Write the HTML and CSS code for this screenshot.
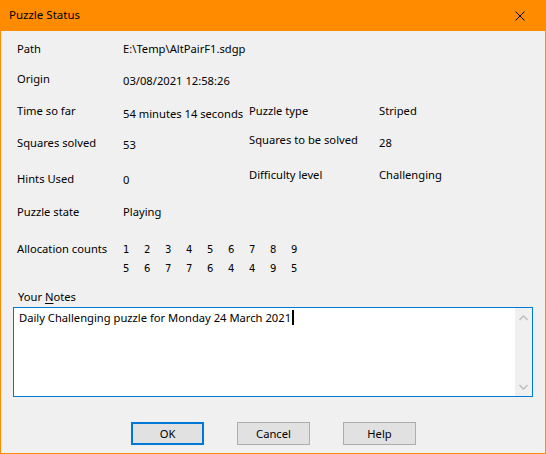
FILE: index.html
```html
<!DOCTYPE html>
<html lang="en">
<head>
<meta charset="utf-8">
<title>Puzzle Status</title>
<link rel="stylesheet" href="styles.css">
</head>
<body>
<div class="window">
  <div class="titlebar">
    <span class="title">Puzzle Status</span>
    <span class="close" aria-label="Close">
      <svg width="10" height="10" viewBox="0 0 10 10"><path d="M0.5 0.5 L9.5 9.5 M9.5 0.5 L0.5 9.5" stroke="#000" stroke-width="1" fill="none"/></svg>
    </span>
  </div>
  <div class="client">
    <div class="info">
      <div class="row r-path">
        <span class="lbl">Path</span>
        <span class="val">E:\Temp\AltPairF1.sdgp</span>
      </div>
      <div class="row r-origin">
        <span class="lbl">Origin</span>
        <span class="val dn2">03/08/2021 12:58:26</span>
      </div>
      <div class="row r-time">
        <span class="lbl">Time so far</span>
        <span class="val dn3">54 minutes 14 seconds</span>
        <span class="lbl2">Puzzle type</span>
        <span class="val2">Striped</span>
      </div>
      <div class="row r-squares">
        <span class="lbl dn3">Squares solved</span>
        <span class="val dn5">53</span>
        <span class="lbl2">Squares to be solved</span>
        <span class="val2 dn3">28</span>
      </div>
      <div class="row r-hints">
        <span class="lbl dn4">Hints Used</span>
        <span class="val dn5">0</span>
        <span class="lbl2">Difficulty level</span>
        <span class="val2">Challenging</span>
      </div>
      <div class="row r-state">
        <span class="lbl">Puzzle state</span>
        <span class="val">Playing</span>
      </div>
      <div class="row r-alloc">
        <span class="lbl">Allocation counts</span>
        <div class="counts">
          <span>1</span><span>2</span><span>3</span><span>4</span><span>5</span><span>6</span><span>7</span><span>8</span><span>9</span>
          <span>5</span><span>6</span><span>7</span><span>7</span><span>6</span><span>4</span><span>4</span><span>9</span><span>5</span>
        </div>
      </div>
    </div>
    <div class="notes-label">Your <u>N</u>otes</div>
    <div class="notes">
      <div class="notes-text">Daily Challenging puzzle for Monday 24 March 2021<span class="caret"></span></div>
      <div class="vscroll">
        <svg width="9" height="6" viewBox="0 0 9 6"><path d="M0.5 5 L4.5 1 L8.5 5" stroke="#c2c2c2" stroke-width="1.6" fill="none"/></svg>
        <svg width="9" height="6" viewBox="0 0 9 6"><path d="M0.5 1 L4.5 5 L8.5 1" stroke="#c2c2c2" stroke-width="1.6" fill="none"/></svg>
      </div>
    </div>
    <div class="buttons">
      <button class="btn default">OK</button>
      <button class="btn">Cancel</button>
      <button class="btn">Help</button>
    </div>
  </div>
</div>
</body>
</html>
```
FILE: styles.css
```css
* {
  box-sizing: border-box;
}

html, body {
  margin: 0;
  padding: 0;
  background: #f0f0f0;
}

body {
  font-family: "Noto Sans", "Open Sans", sans-serif;
  font-size: 11.2px;
  line-height: 16px;
  color: #000;
  white-space: nowrap;
}

.window {
  width: 546px;
  height: 454px;
  border: 1px solid #ff8c00;
  border-top: 0;
  display: flex;
  flex-direction: column;
  background: #f0f0f0;
}

/* caption bar */
.titlebar {
  height: 31px;
  margin: 0 -1px;
  background: #ff8c00;
  display: flex;
  align-items: center;
  justify-content: space-between;
  padding: 0 21px 1px 9px;
}

.title {
  font-size: 11.5px;
}

.close {
  display: flex;
  padding-top: 1px;
}

.client {
  flex: 1;
  padding: 10px 12px 0 12px;
  display: flex;
  flex-direction: column;
}

/* label / value table */
.info {
  display: flex;
  flex-direction: column;
  padding-left: 4px;
}

.row {
  display: grid;
  grid-template-columns: 106px 126px 130px 1fr;
  align-items: start;
}

.r-path { height: 30px; }
.r-origin { height: 32px; }
.r-time { height: 29px; }
.r-squares { height: 35px; }
.r-hints { height: 37px; }
.r-state { height: 37px; }
.r-alloc { height: 48px; }

.dn2 { padding-top: 2px; }
.dn3 { padding-top: 3px; }
.dn4 { padding-top: 4px; }
.dn5 { padding-top: 5px; }

.counts {
  grid-column: 2 / 5;
  display: grid;
  grid-template-columns: repeat(9, 21px);
  row-gap: 3px;
  padding-top: 1px;
  font-family: "DejaVu Sans", sans-serif;
  font-size: 10px;
  line-height: 16px;
}

.notes-label {
  padding-left: 5px;
  height: 18px;
}

.notes-label u {
  text-decoration-thickness: 1px;
  text-underline-offset: 2px;
}

/* multiline edit box */
.notes {
  height: 90px;
  width: 520px;
  border: 1px solid #0078d7;
  background: #fff;
  display: flex;
}

.notes-text {
  flex: 1;
  padding: 2px 0 0 5px;
}

.caret {
  display: inline-block;
  width: 2px;
  height: 15px;
  background: #000;
  vertical-align: -3px;
  margin-left: 1px;
}

.vscroll {
  width: 17px;
  background: #f0f0f0;
  display: flex;
  flex-direction: column;
  justify-content: space-between;
  align-items: center;
  padding: 7px 0 6px;
}

.buttons {
  display: flex;
  gap: 33px;
  padding: 25px 0 0 118px;
}

.btn {
  width: 73px;
  height: 23px;
  font: inherit;
  color: #000;
  background: #e1e1e1;
  border: 1px solid #adadad;
  padding: 0;
  margin: 0;
}

.btn.default {
  border: 2px solid #0078d7;
}
```
